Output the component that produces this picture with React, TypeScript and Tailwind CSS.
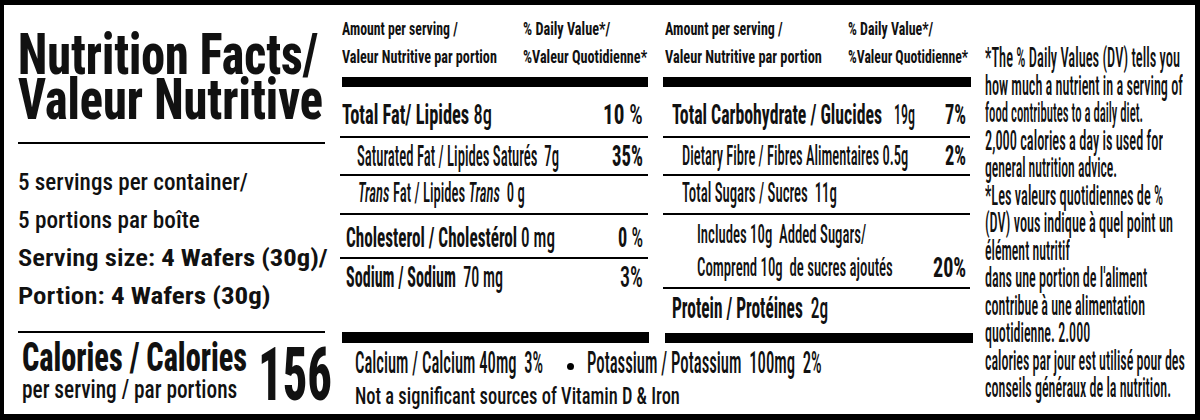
import { useLayoutEffect, useRef, useState, type ReactNode } from "react";

function Fit({ className = "", children }: { className?: string; children: ReactNode }) {
  const outer = useRef<HTMLSpanElement>(null);
  const inner = useRef<HTMLSpanElement>(null);
  const [s, setS] = useState(1);
  useLayoutEffect(() => {
    const fit = () => {
      if (!outer.current || !inner.current) return;
      const w = outer.current.clientWidth;
      const n = inner.current.offsetWidth;
      if (n > 0) setS(w / n);
    };
    fit();
    if (document.fonts) document.fonts.ready.then(fit);
  }, []);
  return (
    <span ref={outer} className={"block shrink-0 " + className}>
      <span
        ref={inner}
        className="inline-block whitespace-pre origin-left"
        style={{ transform: `scaleX(${s})` }}
      >
        {children}
      </span>
    </span>
  );
}

const notes: [string, string][] = [
  ["*The % Daily Values (DV) tells you", "w-[195px]"],
  ["how much a nutrient in a serving of", "w-[198px]"],
  ["food contributes to a daily diet.", "w-[158px]"],
  ["2,000 calories a day is used for", "w-[178px]"],
  ["general nutrition advice.", "w-[132px]"],
  ["*Les valeurs quotidiennes de %", "w-[178px]"],
  ["(DV) vous indique à quel point un", "w-[188px]"],
  ["élément nutritif", "w-[85px]"],
  ["dans une portion de l'aliment", "w-[162px]"],
  ["contribue à une alimentation", "w-[160px]"],
  ["quotidienne. 2.000", "w-[105px]"],
  ["calories par jour est utilisé pour des", "w-[200px]"],
  ["conseils généraux de la nutrition.", "w-[186px]"],
];

export default function App() {
  return (
    <div className="w-[1200px] h-[420px] overflow-hidden bg-white text-[#111] font-medium font-['Roboto_Condensed',Roboto,sans-serif]">
      <div className="flex h-full w-full border-black border-t-[5px] border-l-[4px] border-r-[5px] border-b-[6px]">
        {/* Left column */}
        <div className="w-[336px] shrink-0 pl-[14px]">
          <div className="pt-[27px] text-[57px] leading-[45px] font-extrabold">
            <Fit className="w-[300px]">Nutrition Facts/</Fit>
            <Fit className="w-[305px]">Valeur Nutritive</Fit>
          </div>
          <div className="mt-[20px] h-[2px] w-[307px] bg-black" />
          <div className="mt-[19px] text-[24px] leading-[38px]">
            <Fit className="w-[230px]">5 servings per container/</Fit>
            <Fit className="w-[182px]">5 portions par boîte</Fit>
            <Fit className="w-[310px]">
              <span className="font-semibold">Serving size: </span>
              <span className="font-bold">4 Wafers (30g)/</span>
            </Fit>
            <Fit className="w-[252px]">
              <span className="font-semibold">Portion: </span>
              <span className="font-bold">4 Wafers (30g)</span>
            </Fit>
          </div>
          <div className="mt-[16px] h-[2px] w-[307px] bg-black" />
          <div className="flex items-start pt-[5px]">
            <div className="ml-[4px] flex flex-col">
              <Fit className="w-[225px] text-[40px] leading-[40px] font-extrabold">Calories / Calories</Fit>
              <Fit className="w-[215px] text-[25px] leading-[24px]">per serving / par portions</Fit>
            </div>
            <Fit className="ml-[11px] w-[74px] text-[74px] leading-[74px] font-extrabold">156</Fit>
          </div>
        </div>

        {/* Middle section */}
        <div className="w-[633px] shrink-0">
          <div className="flex">
            {/* Column 2 */}
            <div className="w-[310px] shrink-0">
              <div className="flex pt-[10px] pl-[2px] text-[19px] leading-[28px] font-bold">
                <div className="w-[181px] shrink-0">
                  <Fit className="w-[116px]">Amount per serving /</Fit>
                  <Fit className="w-[155px]">Valeur Nutritive par portion</Fit>
                </div>
                <div>
                  <Fit className="w-[87px]">% Daily Value*/</Fit>
                  <Fit className="w-[124px]">%Valeur Quotidienne*</Fit>
                </div>
              </div>
              <div className="mt-[6px] ml-[2px] h-[10px] w-[306px] bg-black" />
              <div className="leading-[30px]">
                <div className="flex h-[51px] w-[308px] items-start border-b-2 border-black pt-[13px] pl-[2px] pr-[5px] text-[28px]">
                  <Fit className="w-[150px]">
                    <span className="font-bold">Total Fat/ Lipides</span> 8g
                  </Fit>
                  <Fit className="ml-auto w-[40px]">
                    <span className="font-bold">10</span> %
                  </Fit>
                </div>
                <div className="flex h-[38px] w-[308px] items-start border-b-2 border-black pt-[3px] pl-[17px] pr-[5px] text-[29px]">
                  <Fit className="w-[202px]">Saturated Fat / Lipides Saturés  7g</Fit>
                  <Fit className="ml-auto w-[31px] font-bold">35%</Fit>
                </div>
                <div className="flex h-[39px] w-[308px] items-start border-b-2 border-black pt-[2px] pl-[18px] pr-[5px] text-[28px]">
                  <Fit className="w-[167px]">
                    <span className="italic">Trans</span> Fat / Lipides <span className="italic">Trans</span>  0 g
                  </Fit>
                </div>
                <div className="flex h-[44px] w-[308px] items-start border-b-2 border-black pt-[8px] pl-[6px] pr-[5px] text-[27px]">
                  <Fit className="w-[209px]">
                    <span className="font-bold">Cholesterol / Cholestérol</span> 0 mg
                  </Fit>
                  <Fit className="ml-auto w-[25px]">
                    <span className="font-bold">0</span> %
                  </Fit>
                </div>
                <div className="flex h-[73px] w-[308px] items-start pt-[3px] pl-[6px] pr-[5px] text-[29px]">
                  <Fit className="w-[157px]">
                    <span className="font-bold">Sodium / Sodium</span>  70 mg
                  </Fit>
                  <Fit className="ml-auto w-[23px]">3%</Fit>
                </div>
              </div>
              <div className="ml-[2px] h-[11px] w-[307px] bg-black" />
            </div>

            {/* Column 3 */}
            <div className="ml-[13px] w-[310px] shrink-0">
              <div className="flex pt-[10px] pl-[2px] text-[19px] leading-[28px] font-bold">
                <div className="w-[183px] shrink-0">
                  <Fit className="w-[118px]">Amount per serving /</Fit>
                  <Fit className="w-[157px]">Valeur Nutritive par portion</Fit>
                </div>
                <div>
                  <Fit className="w-[85px]">% Daily Value*/</Fit>
                  <Fit className="w-[120px]">%Valeur Quotidienne*</Fit>
                </div>
              </div>
              <div className="mt-[6px] h-[10px] w-[308px] bg-black" />
              <div className="leading-[30px]">
                <div className="flex h-[51px] w-[307px] items-start border-b-2 border-black pt-[13px] pl-[9px] pr-[4px] text-[28px]">
                  <Fit className="w-[210px] font-bold">Total Carbohydrate / Glucides</Fit>
                  <Fit className="ml-[12px] w-[21px]">19g</Fit>
                  <Fit className="ml-auto w-[21px] font-bold">7%</Fit>
                </div>
                <div className="flex h-[38px] w-[307px] items-start border-b-2 border-black pt-[3px] pl-[19px] pr-[4px] text-[28px]">
                  <Fit className="w-[226px]">Dietary Fibre / Fibres Alimentaires 0.5g</Fit>
                  <Fit className="ml-auto w-[21px] font-bold">2%</Fit>
                </div>
                <div className="flex h-[39px] w-[307px] items-start border-b-2 border-black pt-[2px] pl-[19px] pr-[4px] text-[28px]">
                  <Fit className="w-[155px]">Total Sugars / Sucres  11g</Fit>
                </div>
                <div className="flex h-[74px] w-[307px] items-start border-b-2 border-black pt-[3px] pl-[34px] pr-[4px] leading-[33px]">
                  <div className="text-[25px]">
                    <Fit className="w-[169px]">Includes 10g  Added Sugars/</Fit>
                    <Fit className="w-[196px]">Comprend 10g  de sucres ajoutés</Fit>
                  </div>
                  <Fit className="ml-auto mt-[33px] w-[33px] text-[28px] font-bold">20%</Fit>
                </div>
                <div className="flex h-[44px] w-[307px] items-start pt-[4px] pl-[9px] pr-[4px] text-[30px]">
                  <Fit className="w-[156px]">
                    <span className="font-bold">Protein / Protéines</span>  2g
                  </Fit>
                </div>
              </div>
              <div className="ml-[2px] h-[10px] w-[308px] bg-black" />
            </div>
          </div>

          <div className="pl-[15px] pt-[5px]">
            <div className="flex items-start text-[31px] leading-[30px]">
              <Fit className="w-[188px]">Calcium / Calcium 40mg  3%</Fit>
              <span className="ml-[24px] mt-[15px] h-[7px] w-[7px] shrink-0 rounded-full bg-black" />
              <Fit className="ml-[13px] w-[235px]">Potassium / Potassium  100mg  2%</Fit>
            </div>
            <Fit className="mt-[3px] w-[325px] text-[24px] leading-[30px]">
              Not a significant sources of Vitamin D &amp; Iron
            </Fit>
          </div>
        </div>

        {/* Right column */}
        <div className="flex-1 pl-[12px] pt-[39px] text-[28px] leading-[27.5px]">
          {notes.map(([t, w]) => (
            <Fit key={t} className={w}>
              {t}
            </Fit>
          ))}
        </div>
      </div>
    </div>
  );
}
